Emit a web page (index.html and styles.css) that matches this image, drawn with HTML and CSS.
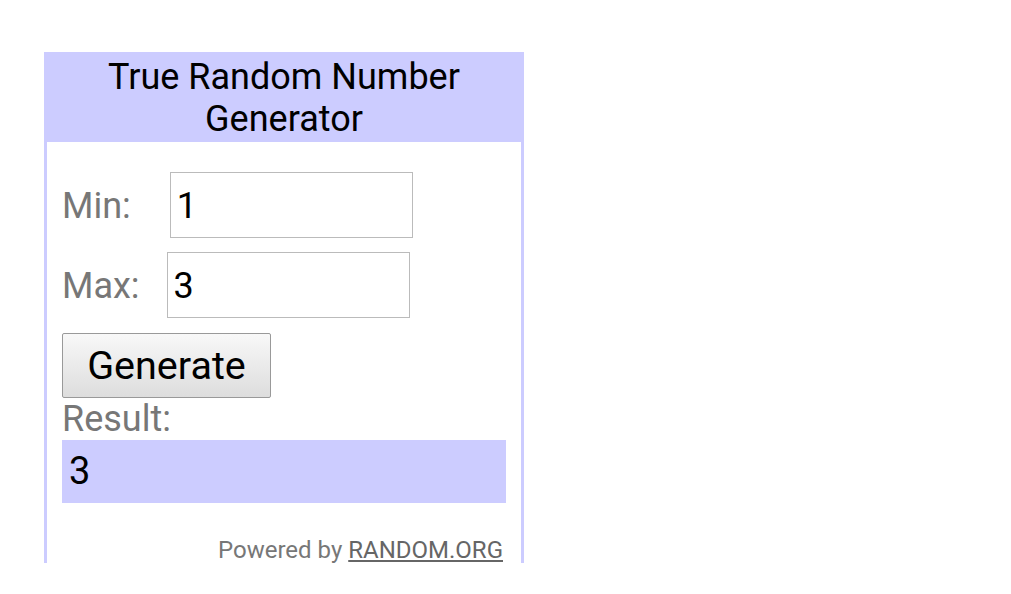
FILE: index.html
```html
<!DOCTYPE html>
<html>
<head>
<meta charset="utf-8">
<link rel="stylesheet" href="styles.css">
</head>
<body>
<div class="widget">
  <div class="title">True Random Number<br>Generator</div>
  <div class="content">
    <div class="row row-min">
      <span class="label">Min:</span>
      <input class="field field-min" type="text" value="1">
    </div>
    <div class="row row-max">
      <span class="label">Max:</span>
      <input class="field field-max" type="text" value="3">
    </div>
    <button class="generate" type="button">Generate</button>
    <div class="label result-label">Result:</div>
    <div class="result">3</div>
    <div class="powered">Powered by <a href="#">RANDOM.ORG</a></div>
  </div>
</div>
</body>
</html>
```

FILE: styles.css
```css
html, body {
  margin: 0;
  padding: 0;
  background: #ffffff;
}
body {
  font-family: Roboto, "Liberation Sans", sans-serif;
}
.widget {
  margin-left: 44px;
  margin-top: 52px;
  width: 480px;
  height: 511px;
  box-sizing: border-box;
  border: 3px solid #ccccff;
  border-bottom: none;
  overflow: hidden;
}
.title {
  background: #ccccff;
  margin: -3px -3px 0 -3px;
  height: 90px;
  box-sizing: border-box;
  padding-top: 4px;
  text-align: center;
  font-size: 36px;
  line-height: 42px;
  color: #000000;
}
.content {
  padding: 0 15px;
}
.row {
  display: flex;
  align-items: baseline;
  height: 66px;
}
.row-min {
  margin-top: 30px;
}
.row-max {
  margin-top: 14px;
}
.label {
  font-size: 36px;
  line-height: 42px;
  color: #777777;
  padding-top: 1px;
}
.field {
  box-sizing: border-box;
  width: 243px;
  height: 66px;
  border: 1px solid #bbbbbb;
  padding: 2px 0 0 6px;
  margin: 0;
  font-family: Roboto, "Liberation Sans", sans-serif;
  font-size: 36px;
  color: #000000;
  background: #ffffff;
  outline: none;
}
.field-min {
  margin-left: 39px;
}
.field-max {
  margin-left: 27px;
}
.generate {
  display: block;
  margin-top: 15px;
  width: 209px;
  height: 65px;
  box-sizing: border-box;
  border: 1px solid #999999;
  border-radius: 2px;
  background: linear-gradient(#f8f8f8, #dddddd);
  font-family: Roboto, "Liberation Sans", sans-serif;
  font-size: 39.5px;
  color: #000000;
  padding: 0;
}
.result-label {
  display: block;
  padding-top: 0;
}
.result {
  background: #ccccff;
  height: 63px;
  box-sizing: border-box;
  padding: 10px 0 0 7px;
  font-size: 38px;
  line-height: 42px;
  color: #000000;
}
.powered {
  margin-top: 35px;
  padding-right: 3px;
  text-align: right;
  font-size: 24px;
  line-height: 24px;
  color: #777777;
}
.powered a {
  color: #666666;
  text-decoration: underline;
}
```
